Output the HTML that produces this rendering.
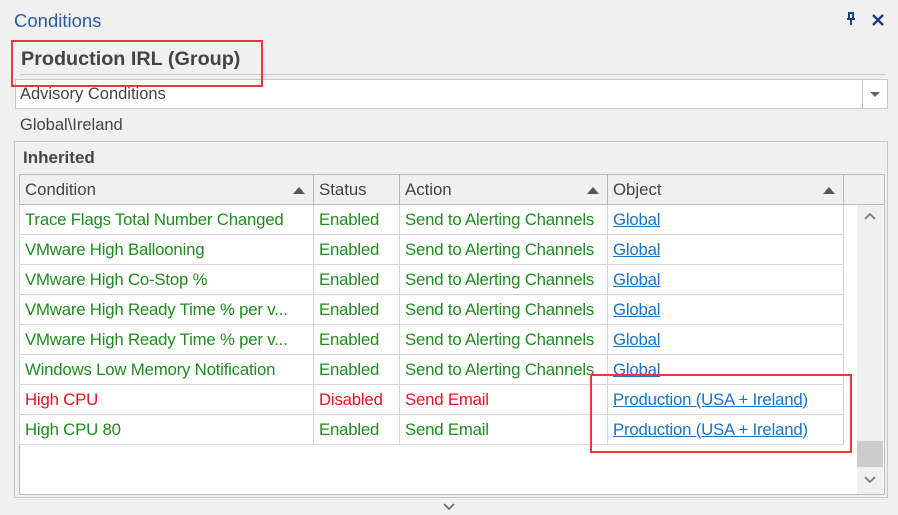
<!DOCTYPE html>
<html><head><meta charset="utf-8"><style>
*{margin:0;padding:0;box-sizing:border-box}
body{width:898px;height:515px;background:#f0f0f0;font-family:"Liberation Sans",sans-serif;font-size:16.5px;position:relative;overflow:hidden;color:#333}
.a{position:absolute;white-space:nowrap}
.g{color:#1e8c1e}.r{color:#e81123}
.lnk{color:#1a73c8;text-decoration:underline}
table{border-collapse:collapse;position:absolute;left:19px;top:174px;table-layout:fixed}
td{height:30px;border:1px solid #d6d6d6;padding:0 5px;background:#fff;white-space:nowrap;overflow:hidden;font-size:16.8px;letter-spacing:-0.2px}
th{height:30px;border:1px solid #b9b9b9;padding:0 5px;background:#f0f0f0;font-weight:normal;text-align:left;font-size:16.8px;color:#444;position:relative}
.tri{position:absolute;right:8px;top:12px;width:0;height:0;border-left:6px solid transparent;border-right:6px solid transparent;border-bottom:7px solid #555}
</style></head><body>
<div class="a" style="left:14px;top:10px;font-size:18.5px;color:#2e5c9a">Conditions</div>
<svg class="a" style="left:845px;top:12px" width="12" height="14"><path d="M3 1h6M4 1v6M8 1v6M2 7h8M6 7v6" stroke="#1c3f7a" stroke-width="2" fill="none"/></svg>
<svg class="a" style="left:872px;top:14px" width="12" height="12"><path d="M1 1L11 11M11 1L1 11" stroke="#1c3f7a" stroke-width="2.4"/></svg>
<div class="a" style="left:21px;top:48px;font-size:19.8px;font-weight:bold;color:#444">Production IRL (Group)</div>
<div class="a" style="left:20px;top:74px;width:866px;height:1px;background:#c8c8c8"></div>
<div class="a" style="left:15px;top:79px;width:873px;height:30px;background:#fff;border:1px solid #c6c6c6"></div>
<div class="a" style="left:862px;top:79px;width:26px;height:30px;border:1px solid #c6c6c6;background:#fff"></div>
<div class="a" style="left:870px;top:92px;width:0;height:0;border-left:5px solid transparent;border-right:5px solid transparent;border-top:5px solid #666"></div>
<div class="a" style="left:20px;top:85px;color:#444">Advisory Conditions</div>
<div class="a" style="left:20px;top:116px;color:#444">Global\Ireland</div>
<div class="a" style="left:14px;top:141px;width:874px;height:357px;border:1px solid #c6c6c6"></div>
<div class="a" style="left:23px;top:148px;font-weight:bold;font-size:17px;color:#444">Inherited</div>
<div class="a" style="left:19px;top:174px;width:866px;height:321px;background:#fff;border:1px solid #b9b9b9"></div>
<table>
<colgroup><col style="width:294px"><col style="width:86px"><col style="width:208px"><col style="width:236px"><col style="width:41px"></colgroup>
<tr><th>Condition<span class="tri"></span></th><th>Status</th><th>Action<span class="tri"></span></th><th>Object<span class="tri"></span></th><th></th></tr>
<tr><td class="g">Trace Flags Total Number Changed</td><td class="g">Enabled</td><td class="g">Send to Alerting Channels</td><td><span class="lnk">Global</span></td></tr>
<tr><td class="g">VMware High Ballooning</td><td class="g">Enabled</td><td class="g">Send to Alerting Channels</td><td><span class="lnk">Global</span></td></tr>
<tr><td class="g">VMware High Co-Stop %</td><td class="g">Enabled</td><td class="g">Send to Alerting Channels</td><td><span class="lnk">Global</span></td></tr>
<tr><td class="g">VMware High Ready Time % per v...</td><td class="g">Enabled</td><td class="g">Send to Alerting Channels</td><td><span class="lnk">Global</span></td></tr>
<tr><td class="g">VMware High Ready Time % per v...</td><td class="g">Enabled</td><td class="g">Send to Alerting Channels</td><td><span class="lnk">Global</span></td></tr>
<tr><td class="g">Windows Low Memory Notification</td><td class="g">Enabled</td><td class="g">Send to Alerting Channels</td><td><span class="lnk">Global</span></td></tr>
<tr><td class="r">High CPU</td><td class="r">Disabled</td><td class="r">Send Email</td><td><span class="lnk">Production (USA + Ireland)</span></td></tr>
<tr><td class="g">High CPU 80</td><td class="g">Enabled</td><td class="g">Send Email</td><td><span class="lnk">Production (USA + Ireland)</span></td></tr>
</table>
<div class="a" style="left:857px;top:205px;width:26px;height:289px;background:#f0f0f0"></div>
<div class="a" style="left:857px;top:441px;width:26px;height:26px;background:#cdcdcd"></div>
<svg class="a" style="left:864px;top:212px" width="12" height="8"><path d="M1 7L6 2L11 7" stroke="#777" stroke-width="1.6" fill="none"/></svg>
<svg class="a" style="left:864px;top:476px" width="12" height="8"><path d="M1 1L6 6L11 1" stroke="#777" stroke-width="1.6" fill="none"/></svg>
<svg class="a" style="left:443px;top:503px" width="12" height="8"><path d="M1 1L6 6L11 1" stroke="#666" stroke-width="1.6" fill="none"/></svg>
<div class="a" style="left:11px;top:40px;width:252px;height:47px;border:2px solid #e8383d"></div>
<div class="a" style="left:590px;top:374px;width:262px;height:79px;border:2px solid #e8383d"></div>
</body></html>
